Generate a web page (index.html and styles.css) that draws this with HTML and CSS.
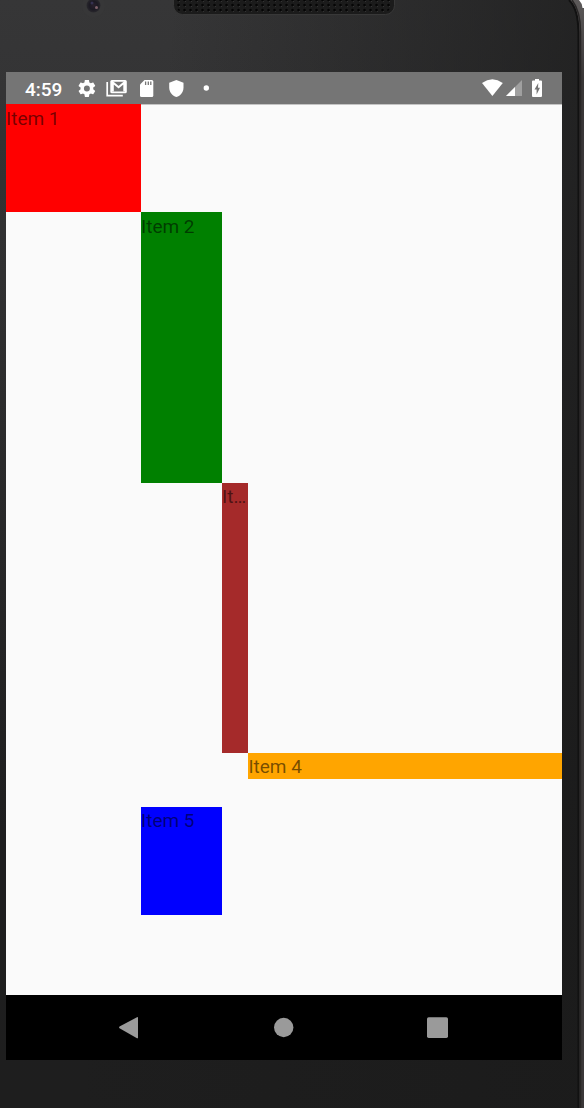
FILE: index.html
```html
<!DOCTYPE html>
<html lang="en">
<head>
<meta charset="utf-8">
<title>Grid layout</title>
<link rel="stylesheet" href="styles.css">
</head>
<body>
<div class="phone">
  <svg class="edge" width="24" height="1108" viewBox="0 0 24 1108">
    <defs><linearGradient id="rim" x1="0" y1="0" x2="0" y2="1"><stop offset="0" stop-color="#5c5959"/><stop offset=".07" stop-color="#393637"/><stop offset="1" stop-color="#3b3839"/></linearGradient></defs>
    <path d="M9 0C16 7 19 17 19 32V1108H24V0Z" fill="url(#rim)"/>
    <path d="M9 0C16 7 18 17 18.500 32V1108" fill="none" stroke="#111" stroke-width="2"/>
    <path d="M12 0C19 9 20.500 20 20.500 32V1108" fill="none" stroke="#282626" stroke-width="1.500"/>
    <path d="M19 0Q22 3 22.500 8H24V0Z" fill="#fff"/>
  </svg>
  <header class="bezel">
    <svg width="584" height="72" viewBox="0 0 584 72">
      <defs>
        <pattern id="holes" x="176" y="3" width="6" height="5" patternUnits="userSpaceOnUse"><circle cx="2.500" cy="2" r="1.300" fill="#050505"/><circle cx="3.500" cy="3.500" r=".6" fill="#363636"/></pattern>
        <radialGradient id="lens"><stop offset="0" stop-color="#29202d"/><stop offset=".6" stop-color="#1c1a23"/><stop offset="1" stop-color="#29282d"/></radialGradient>
      </defs>
      <circle cx="93.500" cy="5.500" r="11.500" fill="#373738"/>
      <circle cx="93.500" cy="5.500" r="7" fill="url(#lens)"/>
      <circle cx="96.500" cy="7.500" r="1.500" fill="#80626b"/>
      <circle cx="92" cy="3" r="1.500" fill="#353150"/>
      <rect x="173.500" y="-14" width="221" height="28.500" rx="9" fill="#1b1b1b" stroke="#383838"/>
      <rect x="177" y="-7" width="213" height="19" rx="5" fill="url(#holes)"/>
    </svg>
  </header>
  <main class="screen">
    <div class="status">
      <span class="clock">4:59</span>
      <svg class="status-icons" width="150" height="32" viewBox="0 0 150 32" fill="#fff">
        <svg x="8.700" y="6.200" width="20.400" height="20.400" viewBox="0 0 24 24"><path d="M19.430 12.980c.04-.32.07-.64.07-.98s-.03-.66-.07-.98l2.110-1.650c.19-.15.24-.42.12-.64l-2-3.460c-.12-.22-.39-.3-.61-.22l-2.490 1c-.52-.4-1.080-.73-1.690-.98l-.38-2.650C14.460 2.180 14.250 2 14 2h-4c-.25 0-.46.180-.49.420l-.38 2.650c-.61.250-1.170.590-1.690.980l-2.490-1c-.23-.09-.49 0-.61.220l-2 3.460c-.13.220-.07.490.12.640l2.110 1.650c-.04.320-.07.650-.07.980s.03.660.07.980l-2.110 1.650c-.19.150-.24.420-.12.640l2 3.460c.12.220.39.300.61.220l2.490-1c.52.400 1.080.730 1.690.980l.38 2.650c.03.240.24.420.49.420h4c.25 0 .46-.18.490-.42l.38-2.650c.61-.25 1.170-.59 1.690-.98l2.490 1c.23.090.49 0 .61-.22l2-3.460c.12-.22.070-.49-.12-.64zM12 15.500a3.500 3.500 0 1 1 0-7 3.500 3.500 0 0 1 0 7z"/></svg>
        <g transform="translate(2.300 0)" fill="none" stroke="#fff"><path d="M36.900 10V23.700H52.500" stroke-width="1.700"/><rect x="40.900" y="8.900" width="14.700" height="11.500" rx=".7" stroke-width="1.800"/><path d="M42.500 19.500V10.500L48.300 15.300L54 10.500V19.500" stroke-width="2"/></g>
        <g transform="translate(-6.700 0)">
          <path d="M83.200 8H90.500Q92 8 92 9.500V23.500Q92 25 90.500 25H80.200Q78.700 25 78.700 23.500V12.500Z"/>
          <path d="M84.300 9.500V13M87 9.500V13M89.500 9.500V13" stroke="#757575" stroke-width="1.300"/>
        </g>
        <path d="M108.400 8L115.500 10.700V15.500C115.500 20 112.500 23.800 108.400 25C104.300 23.800 101.200 20 101.200 15.500V10.700Z"/>
        <circle cx="138.300" cy="16" r="2.700"/>
      </svg>
      <svg class="system-icons" width="64" height="32" viewBox="0 0 64 32">
        <path d="M2 11Q12.400 3.600 22.800 11L12.400 24Z" fill="#fff"/>
        <path d="M42 8V24H26Z" fill="#a0a0a0"/><path d="M35 15V24H26Z" fill="#fff"/>
        <path d="M55 7H59V8.500H61Q62 8.500 62 9.500V24Q62 25 61 25H53Q52 25 52 24V9.500Q52 8.500 53 8.500H55Z" fill="#fff"/>
        <path d="M58.300 11L54.500 17.500H56.600V22.500L60 15.700H58Z" fill="#757575"/>
      </svg>
    </div>
    <section class="grid">
      <div class="item item-1">Item 1</div>
      <div class="item item-2">Item 2</div>
      <div class="item item-3">It…</div>
      <div class="item item-4">Item 4</div>
      <div class="item item-5">Item 5</div>
    </section>
    <nav class="nav">
      <svg width="556" height="65" viewBox="0 0 556 65" fill="#9a9a9a">
        <path d="M113.500 31.500Q112.500 32.500 113.500 33.300L131 43.200Q132 43.700 132 42.500V23Q132 21.700 131 22.200Z"/>
        <circle cx="277.700" cy="32.500" r="9.700"/>
        <rect x="421" y="22.200" width="21" height="20.700" rx="1.700"/>
      </svg>
    </nav>
  </main>
</div>
</body>
</html>
```
FILE: styles.css
```css
* { box-sizing: border-box; }
body { margin: 0; font-family: Roboto, sans-serif; }
.phone {
  position: relative;
  width: 584px;
  height: 1108px;
  overflow: hidden;
  background: linear-gradient(95deg, transparent 25%, rgba(27, 27, 27, .8) 95%), linear-gradient(#363637 0%, #303031 25%, #1e1e1f 75%, #1e1e1e 100%);
}
.edge { position: absolute; top: 0; right: 0; }
.bezel { height: 72px; }
svg { display: block; flex-shrink: 0; }
.screen {
  display: flex;
  flex-direction: column;
  width: 556px;
  height: 988px;
  margin-left: 6px;
  background: #fafafa;
}
.status {
  display: flex;
  height: 32px;
  background: #757575;
  color: #fff;
}
.clock {
  width: 43px;
  margin-left: 19px;
  font-size: 19px;
  font-weight: 500;
  line-height: 35px;
}
.system-icons { margin-left: auto; margin-right: 18px; }
.grid {
  display: grid;
  height: 891px;
  grid-template-columns: 135px 81px 26.4px 1fr;
  grid-template-rows: 108.3px 270.3px 270.2px 54px 108.2px 1fr;
  box-shadow: inset 0 1px #c4c4c4;
}
.item {
  overflow: hidden;
  color: rgba(0, 0, 0, .54);
  font-size: 19px;
  line-height: 27px;
  white-space: nowrap;
}
.item-1 { grid-area: 1 / 1; padding-top: 1px; background: #f00; }
.item-2 { grid-area: 2 / 2; padding-top: 1px; background: #008000; }
.item-3 { grid-area: 3 / 3; background: #a52a2a; }
.item-4 { grid-area: 4 / 4; height: 26px; background: #ffa500; }
.item-5 { grid-area: 5 / 2; background: #00f; }
.nav { height: 65px; background: #000; }
```
